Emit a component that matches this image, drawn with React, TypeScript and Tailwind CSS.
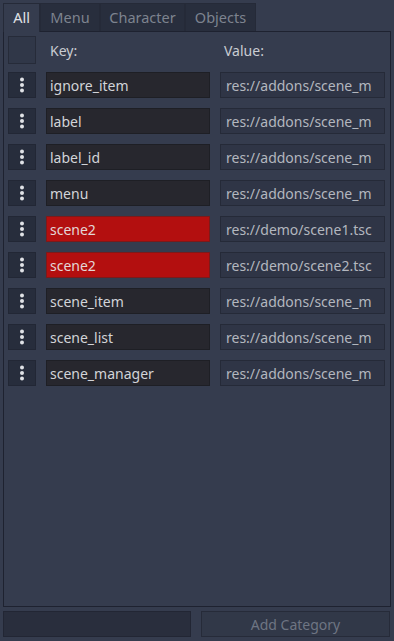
import { ReactNode } from 'react'

const rows = [
  { key: 'ignore_item', value: 'res://addons/scene_m' },
  { key: 'label', value: 'res://addons/scene_m' },
  { key: 'label_id', value: 'res://addons/scene_m' },
  { key: 'menu', value: 'res://addons/scene_m' },
  { key: 'scene2', value: 'res://demo/scene1.tsc', dup: true },
  { key: 'scene2', value: 'res://demo/scene2.tsc', dup: true },
  { key: 'scene_item', value: 'res://addons/scene_m' },
  { key: 'scene_list', value: 'res://addons/scene_m' },
  { key: 'scene_manager', value: 'res://addons/scene_m' },
]

const Tab = ({ children, active, w }: { children: ReactNode; active?: boolean; w: string }) => (
  <div
    className={`${w} flex items-center justify-center border border-b-0 border-[#252a38] text-[14.5px] ${
      active ? 'bg-[#353c4e] text-[#e0e2e6] -mb-px h-[29px]' : 'bg-[#282e3d] text-[#7d838f] h-[28px]'
    }`}
  >
    {children}
  </div>
)

const Dots = () => (
  <svg width="6" height="16" viewBox="0 0 6 16">
    <circle cx="3" cy="2.5" r="2" fill="#e0e2e6" />
    <circle cx="3" cy="8" r="2" fill="#e0e2e6" />
    <circle cx="3" cy="13.5" r="2" fill="#e0e2e6" />
  </svg>
)

export default function App() {
  return (
    <div
      className="w-[394px] h-[641px] bg-[#353c4e] flex flex-col px-[3px] pt-[3px] text-[14px] overflow-hidden"
      style={{ fontFamily: '"Noto Sans", "Open Sans", sans-serif' }}
    >
      <div className="flex relative z-10">
        <Tab active w="w-[37px]">All</Tab>
        <Tab w="w-[60px]">Menu</Tab>
        <Tab w="w-[85px]">Character</Tab>
        <Tab w="w-[71px]">Objects</Tab>
      </div>
      <div className="h-[576px] border border-[#1e2230] bg-[#353c4e] flex flex-col px-[4px] pt-[4px]">
        <div className="flex items-center h-[28px] mb-[8px]">
          <div className="w-[28px] h-[28px] bg-[#303748] border border-[#262b39]" />
          <span className="ml-[14px] w-[174px] text-[#c9ccd2]">Key:</span>
          <span className="text-[#c9ccd2]">Value:</span>
        </div>
        <div className="flex flex-col gap-[10px]">
          {rows.map((r, i) => (
            <div key={i} className="flex items-center h-[26px]">
              <div className="w-[28px] h-[26px] bg-[#272d3c] border border-[#222735] flex items-center justify-center">
                <Dots />
              </div>
              <div
                className={`ml-[10px] w-[164px] h-[26px] flex items-center px-[3px] border ${
                  r.dup
                    ? 'bg-[#b30f0f] border-[#7c1a1a] text-[#e4d6d6]'
                    : 'bg-[#27272e] border-[#1e1f25] text-[#d2d4d8]'
                }`}
              >
                {r.key}
              </div>
              <div className="ml-[10px] w-[165px] h-[26px] flex items-center px-[5px] bg-[#2f3546] border border-[#252a38] text-[#b3b7bf] whitespace-nowrap overflow-hidden">
                {r.value}
              </div>
            </div>
          ))}
        </div>
      </div>
      <div className="flex mt-[4px] gap-[10px]">
        <div className="w-[188px] h-[26px] bg-[#292e3d] border border-[#222634]" />
        <div className="w-[189px] h-[26px] bg-[#313848] border border-[#262b39] flex items-center justify-center text-[#6e7583]">
          Add Category
        </div>
      </div>
    </div>
  )
}
